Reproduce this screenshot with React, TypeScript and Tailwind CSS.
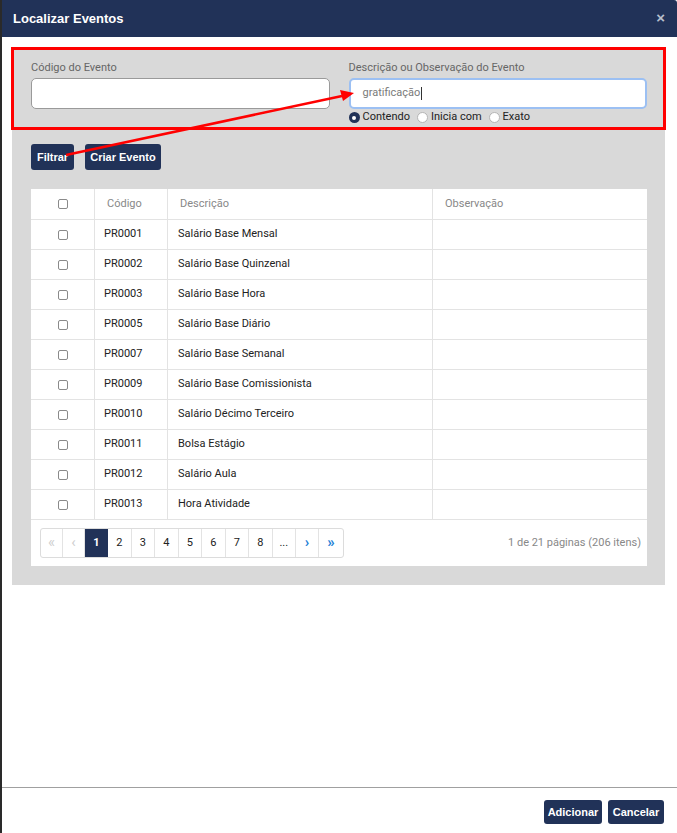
import React from "react";

const rows = [
  ["PR0001", "Salário Base Mensal"],
  ["PR0002", "Salário Base Quinzenal"],
  ["PR0003", "Salário Base Hora"],
  ["PR0005", "Salário Base Diário"],
  ["PR0007", "Salário Base Semanal"],
  ["PR0009", "Salário Base Comissionista"],
  ["PR0010", "Salário Décimo Terceiro"],
  ["PR0011", "Bolsa Estágio"],
  ["PR0012", "Salário Aula"],
  ["PR0013", "Hora Atividade"],
];

function Check() {
  return <span className="block h-[10px] w-[10px] rounded-[2px] border border-[#8a8a8a] bg-white" />;
}

function Radio({ on, label }: { on?: boolean; label: string }) {
  return (
    <label className="flex items-center gap-[3px]">
      {on ? (
        <span className="flex h-[11px] w-[11px] items-center justify-center rounded-full bg-[#213258]">
          <span className="h-[4px] w-[4px] rounded-full bg-white" />
        </span>
      ) : (
        <span className="h-[11px] w-[11px] rounded-full border border-[#b5b5b5] bg-white" />
      )}
      <span>{label}</span>
    </label>
  );
}

export default function App() {
  const pages = ["1", "2", "3", "4", "5", "6", "7", "8", "..."];
  return (
    <div className="relative flex h-[833px] w-[677px] overflow-hidden bg-[#3a3a3a] font-['Roboto',sans-serif]">
      <div className="w-[2px] shrink-0 bg-[#2a2a2a]" />
      <div className="flex flex-1 flex-col bg-white">
        {/* header */}
        <div className="flex h-[37px] items-center justify-between rounded-tr-[3px] bg-[#213258] pl-[11px] pr-[12px]">
          <h2 className="font-['Liberation_Sans',sans-serif] text-[13px] font-bold text-white">Localizar Eventos</h2>
          <span className="font-['Liberation_Sans',sans-serif] text-[15px] font-bold text-[#b8bfcc]">×</span>
        </div>

        {/* body */}
        <div className="flex-1 pl-[10px] pr-[12px] pt-[10px]">
          <div className="bg-[#d9d9d9] pl-[19px] pr-[18px] pb-[19px]">
            <div className="flex gap-[19px] pt-[13px]">
              <div className="flex-1">
                <div className="mb-[4px] h-[14px] text-[11px] text-[#666]">Código do Evento</div>
                <input className="block h-[31px] w-full rounded-[5px] border border-[#9a9a9a] bg-white px-[12px] text-[11px] outline-none" />
              </div>
              <div className="flex-1">
                <div className="mb-[4px] h-[14px] text-[11px] text-[#666]">Descrição ou Observação do Evento</div>
                <div className="flex h-[31px] items-center rounded-[5px] border-2 border-[#9cc0f3] bg-white px-[12px] text-[11px] text-[#7a7a7a]">
                  gratificação<span className="ml-[1px] h-[13px] w-px bg-[#333]" />
                </div>
                <div className="mt-[2px] flex h-[13px] items-center gap-[7px] text-[11px] text-[#222]">
                  <Radio on label="Contendo" />
                  <Radio label="Inicia com" />
                  <Radio label="Exato" />
                </div>
              </div>
            </div>

            <div className="mt-[20px] flex gap-[11px] font-['Liberation_Sans',sans-serif] text-[11px] font-bold text-white">
              <button className="h-[26px] w-[43px] rounded-[3px] bg-[#213258]">Filtrar</button>
              <button className="h-[26px] w-[76px] rounded-[3px] bg-[#213258]">Criar Evento</button>
            </div>

            <div className="mt-[19px] bg-white text-[11px]">
              <div className="grid h-[31px] grid-cols-[64px_73px_265px_1fr] items-center border-b border-[#e3e3e3] text-[#888]">
                <div className="flex h-full items-center justify-center border-r border-[#e3e3e3]"><Check /></div>
                <div className="flex h-full items-center border-r border-[#e3e3e3] pl-[12px]">Código</div>
                <div className="flex h-full items-center border-r border-[#e3e3e3] pl-[12px]">Descrição</div>
                <div className="pl-[12px]">Observação</div>
              </div>
              {rows.map(([c, d]) => (
                <div key={c} className="grid h-[30px] grid-cols-[64px_73px_265px_1fr] items-center border-b border-[#e3e3e3] text-[#222]">
                  <div className="flex h-full items-center justify-center border-r border-[#e3e3e3]"><Check /></div>
                  <div className="flex h-full items-center border-r border-[#e3e3e3] pl-[9px]">{c}</div>
                  <div className="flex h-full items-center border-r border-[#e3e3e3] pl-[10px]">{d}</div>
                  <div />
                </div>
              ))}
              <div className="flex h-[46px] items-center justify-between pl-[9px] pr-[6px]">
                <div className="flex h-[30px] overflow-hidden rounded-[3px] border border-[#dcdcdc] text-[11px]">
                  <span className="flex w-[22px] items-center justify-center border-r border-[#e3e3e3] pb-[2px] text-[15px] text-[#cfcfcf]">«</span>
                  <span className="flex w-[22px] items-center justify-center border-r border-[#e3e3e3] pb-[2px] text-[15px] text-[#cfcfcf]">‹</span>
                  {pages.map((p, i) => (
                    <span
                      key={p}
                      className={
                        i === 0
                          ? "flex w-[23px] items-center justify-center bg-[#213258] font-bold text-white"
                          : "flex w-[23.5px] items-center justify-center border-r border-[#e3e3e3] text-[#222]"
                      }
                    >
                      {p}
                    </span>
                  ))}
                  <span className="flex w-[23px] items-center justify-center border-r border-[#e3e3e3] pb-[2px] text-[15px] font-bold text-[#1d7fd6]">›</span>
                  <span className="flex w-[24px] items-center justify-center pb-[2px] text-[15px] font-bold text-[#1d7fd6]">»</span>
                </div>
                <span className="text-[11px] text-[#888]">1 de 21 páginas (206 itens)</span>
              </div>
            </div>
          </div>
        </div>

        {/* footer */}
        <div className="flex h-[46px] items-start justify-end gap-[6px] border-t border-[#a0a0a0] pr-[13px] pt-[12px] font-['Liberation_Sans',sans-serif] text-[11px] font-bold text-white">
          <button className="h-[24px] w-[58px] rounded-[3px] bg-[#213258]">Adicionar</button>
          <button className="h-[24px] w-[56px] rounded-[3px] bg-[#213258]">Cancelar</button>
        </div>
      </div>

      {/* annotation */}
      <div className="pointer-events-none absolute left-[11px] top-[47px] h-[83px] w-[655px] border-[3px] border-[#ff0000]" />
      <svg className="pointer-events-none absolute left-0 top-0" width="677" height="833">
        <line x1="66" y1="155" x2="342" y2="96" stroke="#ff0000" strokeWidth="2.5" />
        <polygon points="354,93 340,90 343,101" fill="#ff0000" />
      </svg>
    </div>
  );
}
